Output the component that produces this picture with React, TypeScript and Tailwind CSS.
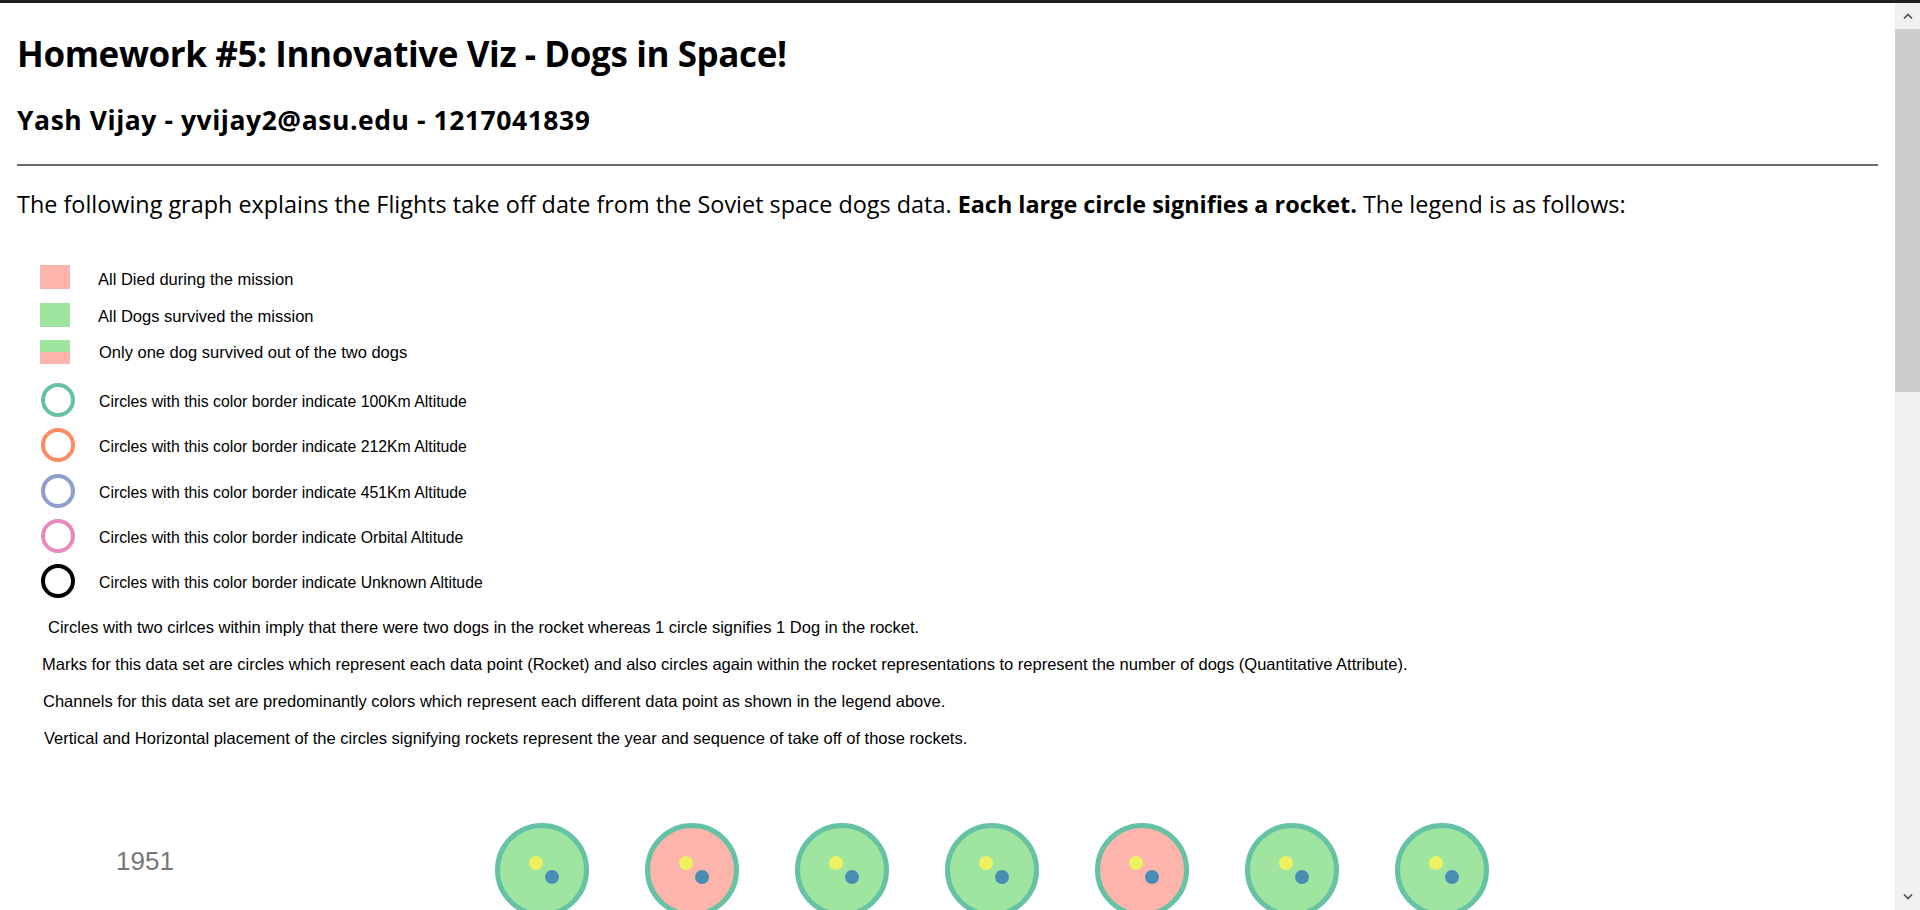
import React from "react";

const heading = { fontFamily: "'Open Sans', Lato, sans-serif" };
const arial = { fontFamily: "'Liberation Sans', Arial, sans-serif" };

const PINK = "#fdb5ab";
const GREEN = "#9fe5a0";

const altitudes = [
  { color: "#66c2a5", label: "100Km" },
  { color: "#fc8d62", label: "212Km" },
  { color: "#8da0cb", label: "451Km" },
  { color: "#e78ac3", label: "Orbital" },
  { color: "#000000", label: "Unknown" },
];

// rockets of 1951, all at 100km
const rockets1951 = [GREEN, PINK, GREEN, GREEN, PINK, GREEN, GREEN];

const notes = [
  { text: "Circles with two cirlces within imply that there were two dogs in the rocket whereas 1 circle signifies 1 Dog in the rocket.", pad: "pl-[31px]" },
  { text: "Marks for this data set are circles which represent each data point (Rocket) and also circles again within the rocket representations to represent the number of dogs (Quantitative Attribute).", pad: "pl-[25px]" },
  { text: "Channels for this data set are predominantly colors which represent each different data point as shown in the legend above.", pad: "pl-[26px]" },
  { text: "Vertical and Horizontal placement of the circles signifying rockets represent the year and sequence of take off of those rockets.", pad: "pl-[27px]" },
];

const Chevron = ({ up }: { up?: boolean }) => (
  <svg width="10" height="6" viewBox="0 0 10 6">
    <path
      d={up ? "M1 5.5 L5 1.5 L9 5.5" : "M1 0.5 L5 4.5 L9 0.5"}
      fill="none"
      stroke="#505050"
      strokeWidth="1.6"
    />
  </svg>
);

const App = () => {
  return (
    <div className="h-screen w-full overflow-hidden flex flex-col bg-white text-black">
      <div className="h-[3px] shrink-0 bg-[#1f1f1f]" />
      <div className="flex-1 flex min-h-0">
        {/* page */}
        <div className="flex-1 min-w-0 px-[17px]">
          <h1 className="pt-[33px] text-[35px] leading-[36px] tracking-[-0.4px] font-bold" style={heading}>
            Homework #5: Innovative Viz - Dogs in Space!
          </h1>
          <h2 className="mt-[33px] text-[26.5px] leading-[30px] tracking-[0.55px] font-bold" style={heading}>
            Yash Vijay - yvijay2@asu.edu - 1217041839
          </h2>
          <div className="mt-[29px] h-[2px] bg-[#6b6b6b]" />
          <p className="mt-[24px] text-[23.4px] leading-[28px] whitespace-nowrap" style={heading}>
            The following graph explains the Flights take off date from the Soviet space dogs data.{" "}
            <b>Each large circle signifies a rocket.</b> The legend is as follows:
          </p>

          {/* legend */}
          <div className="mt-[47px] flex flex-col gap-[13.5px] pl-[23px]" style={arial}>
            <div className="flex items-center h-[24px]">
              <div className="w-[30px] h-[24px]" style={{ background: PINK }} />
              <span className="ml-[28px] pt-[4px] text-[16.5px] leading-[18px]">All Died during the mission</span>
            </div>
            <div className="flex items-center h-[24px]">
              <div className="w-[30px] h-[24px]" style={{ background: GREEN }} />
              <span className="ml-[28px] pt-[2px] text-[16.5px] leading-[18px]">All Dogs survived the mission</span>
            </div>
            <div className="flex items-center h-[24px]">
              <div className="w-[30px] h-[24px] flex flex-col">
                <div className="h-[12px]" style={{ background: GREEN }} />
                <div className="h-[12px]" style={{ background: PINK }} />
              </div>
              <span className="ml-[29px] text-[16.5px] leading-[18px]">Only one dog survived out of the two dogs</span>
            </div>
          </div>

          <div className="mt-[19px] flex flex-col gap-[11.3px] pl-[24px]" style={arial}>
            {altitudes.map((a) => (
              <div key={a.label} className="flex items-center h-[34px]">
                <svg width="34" height="34" viewBox="0 0 34 34">
                  <circle cx="17" cy="17" r="15" fill="none" stroke={a.color} strokeWidth="4" />
                </svg>
                <span className="ml-[24px] pt-[4px] text-[15.8px] leading-[18px]">
                  Circles with this color border indicate {a.label} Altitude
                </span>
              </div>
            ))}
          </div>

          {/* notes */}
          <div className="mt-[10px] flex flex-col" style={arial}>
            {notes.map((n, i) => (
              <div key={i} className={`h-[37px] flex items-center ${n.pad}`}>
                <span className="text-[16.5px] leading-[18px] whitespace-nowrap">{n.text}</span>
              </div>
            ))}
          </div>

          {/* chart */}
          <svg className="block mt-[3.5px]" width="1861" height="200">
            <text x="99" y="110" fontSize="26" fill="#777777" style={arial}>
              1951
            </text>
            {rockets1951.map((fill, i) => {
              const cx = 525 + 150 * i;
              return (
                <g key={i}>
                  <circle cx={cx} cy="110" r="44.5" fill={fill} stroke="#66c2a5" strokeWidth="5" />
                  <circle cx={cx - 6} cy="103" r="7" fill="#eef260" />
                  <circle cx={cx + 10} cy="117" r="7" fill="#4a8db4" />
                </g>
              );
            })}
          </svg>
        </div>

        {/* scrollbar */}
        <div className="w-[25px] shrink-0 bg-[#f0f0f0] flex flex-col">
          <div className="h-[26px] shrink-0 flex items-center justify-center">
            <Chevron up />
          </div>
          <div className="h-[363px] shrink-0 bg-[#cdcdcd]" />
          <div className="flex-1" />
          <div className="h-[26px] shrink-0 flex items-center justify-center">
            <Chevron />
          </div>
        </div>
      </div>
    </div>
  );
};

export default App;
